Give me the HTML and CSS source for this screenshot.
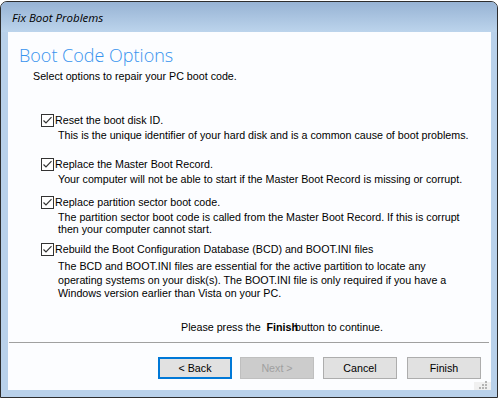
FILE: index.html
```html
<!DOCTYPE html>
<html lang="en">
<head>
  <meta charset="utf-8">
  <title>Fix Boot Problems</title>
  <link rel="stylesheet" href="styles.css">
</head>
<body>
  <div class="window">
    <div class="titlebar">Fix Boot Problems</div>
    <div class="client">
      <h1>Boot Code Options</h1>
      <p class="subtitle">Select options to repair your PC boot code.</p>

      <div class="opt opt1">
        <label><span class="box"><svg width="13" height="13" viewBox="0 0 13 13"><rect x="0.5" y="0.5" width="12" height="12" fill="#fff" stroke="#333"/><path d="M2.5 6.5 L5 9 L10.5 3.2" fill="none" stroke="#333" stroke-width="1.2"/></svg></span>Reset the boot disk ID.</label>
        <p class="desc">This is the unique identifier of your hard disk and is a common cause of boot problems.</p>
      </div>

      <div class="opt opt2">
        <label><span class="box"><svg width="13" height="13" viewBox="0 0 13 13"><rect x="0.5" y="0.5" width="12" height="12" fill="#fff" stroke="#333"/><path d="M2.5 6.5 L5 9 L10.5 3.2" fill="none" stroke="#333" stroke-width="1.2"/></svg></span>Replace the Master Boot Record.</label>
        <p class="desc">Your computer will not be able to start if the Master Boot Record is missing or corrupt.</p>
      </div>

      <div class="opt opt3">
        <label><span class="box"><svg width="13" height="13" viewBox="0 0 13 13"><rect x="0.5" y="0.5" width="12" height="12" fill="#fff" stroke="#333"/><path d="M2.5 6.5 L5 9 L10.5 3.2" fill="none" stroke="#333" stroke-width="1.2"/></svg></span>Replace partition sector boot code.</label>
        <p class="desc">The partition sector boot code is called from the Master Boot Record. If this is corrupt<br>then your computer cannot start.</p>
      </div>

      <div class="opt opt4">
        <label><span class="box"><svg width="13" height="13" viewBox="0 0 13 13"><rect x="0.5" y="0.5" width="12" height="12" fill="#fff" stroke="#333"/><path d="M2.5 6.5 L5 9 L10.5 3.2" fill="none" stroke="#333" stroke-width="1.2"/></svg></span>Rebuild the Boot Configuration Database (BCD) and BOOT.INI files</label>
        <p class="desc">The BCD and BOOT.INI files are essential for the active partition to locate any<br>operating systems on your disk(s). The BOOT.INI file is only required if you have a<br>Windows version earlier than Vista on your PC.</p>
      </div>

      <p class="press">Please press the <b>Finish</b>button to continue.</p>

      <div class="sep"></div>

      <div class="buttons">
        <button class="btn default">&lt; Back</button>
        <button class="btn next" disabled>Next &gt;</button>
        <button class="btn cancel">Cancel</button>
        <button class="btn finish">Finish</button>
      </div>

      <div class="grip">
        <svg width="8" height="8" viewBox="0 0 8 8" fill="#b4b4b4">
          <rect x="6" y="0" width="2" height="2"/>
          <rect x="3" y="3" width="2" height="2"/><rect x="6" y="3" width="2" height="2"/>
          <rect x="0" y="6" width="2" height="2"/><rect x="3" y="6" width="2" height="2"/><rect x="6" y="6" width="2" height="2"/>
        </svg>
      </div>
    </div>
  </div>
</body>
</html>
```

FILE: styles.css
```css
/* Base */
*, *::before, *::after { box-sizing: border-box; }
html, body { margin: 0; padding: 0; background: #fff; }
body {
  font-family: "Liberation Sans", Arial, sans-serif;
  font-size: 10.7px; color: #000;
  padding-top: 1px;
}

/* Window frame */
.window {
  width: 498px; height: 397px;
  border: 1px solid #2d2d2d; border-radius: 7px 7px 0 0;
  background: #b9d1ea;
  display: flex; flex-direction: column;
  overflow: hidden;
}
.titlebar {
  height: 30px; flex: none;
  padding-left: 11px;
  display: flex; align-items: center;
  font-family: "Open Sans", sans-serif; font-style: italic; font-size: 11.5px;
  color: #000;
  background: linear-gradient(#97b3d4, #bcd4ec);
}
.client {
  flex: 1;
  margin: 0 6px 7px 7px;
  background: #fcfdff;
  position: relative;
  display: flex; flex-direction: column;
}

/* Header */
h1 {
  margin: 11px 0 0 11px;
  font-family: "Open Sans", sans-serif; font-weight: 300; font-size: 18px;
  line-height: 24px; color: #3793ee;
}
.subtitle { margin: 3px 0 0 25px; line-height: 13px; }

/* Options */
.opt { padding-left: 33px; }
.opt label { display: flex; align-items: center; line-height: 13px; }
.box { width: 13px; height: 13px; margin-right: 1px; display: flex; }
.desc { margin: 2px 0 0 17px; line-height: 13px; }
.opt1 { margin-top: 31px; }
.opt2 { margin-top: 16px; }
.opt3 { margin-top: 10px; }
.opt3 .desc { line-height: 12px; margin-top: 2px; }
.opt4 { margin-top: 8px; }
.opt4 .desc { line-height: 13.5px; margin-top: 4px; }

.press { margin: 20px 0 0 173px; line-height: 13px; }
.press b { margin-left: 3px; margin-right: -3px; font-weight: bold; }

.sep { height: 1px; background: #a0a0a0; margin: 8px 2px 0 1px; }

/* Buttons */
.buttons {
  display: flex; justify-content: flex-end;
  margin-top: 14px; padding-right: 10px;
}
.btn {
  width: 74px; height: 22px;
  font-family: "Liberation Sans", Arial, sans-serif; font-size: 10.7px; color: #000;
  background: #e1e1e1; border: 1px solid #adadad; padding: 0;
}
.btn.default { border: 2px solid #0078d7; }
.btn.next { margin-left: 8px; background: #cccccc; border-color: #bfbfbf; color: #a0a0a0; }
.btn.cancel { margin-left: 9px; }
.btn.finish { margin-left: 10px; }

/* Size grip overlay */
.grip {
  position: absolute; right: 0; bottom: 0;
  width: 17px; height: 8px;
  background: #f0f0f0;
  display: flex; justify-content: center; align-items: flex-end;
  padding-bottom: 1px;
}
```
